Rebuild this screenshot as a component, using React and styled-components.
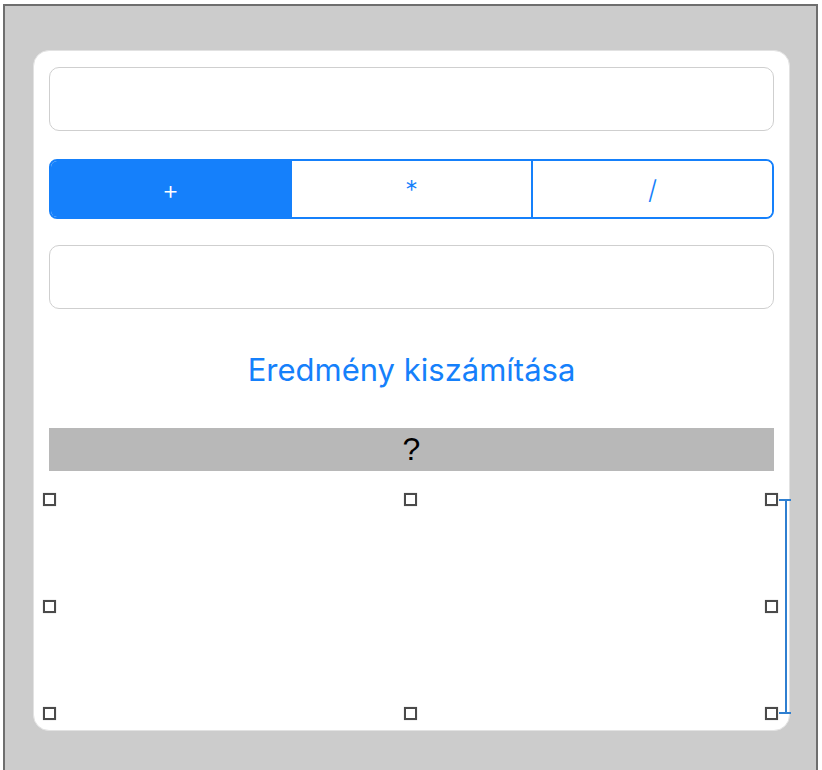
import React, { useState } from 'react';
import styled, { createGlobalStyle } from 'styled-components';

const GlobalStyle = createGlobalStyle`
  html, body {
    margin: 0;
    padding: 0;
    background: #ffffff;
    height: 100%;
  }
  #root {
    height: 100%;
  }
`;

const ops = ['+', '*', '/'];

function App() {
  const [op, setOp] = useState(0);
  return (
    <>
      <GlobalStyle />
      <Stage>
        <Frame>
          <Card>
            <Field />
            <Segmented>
              {ops.map((o, i) => (
                <Segment key={o} $active={op === i} onClick={() => setOp(i)}>
                  {o}
                </Segment>
              ))}
            </Segmented>
            <Field />
            <ActionButton>Eredmény kiszámítása</ActionButton>
            <ResultBar>?</ResultBar>
            <Selection>
              <HandleRow>
                <Handle />
                <Handle />
                <Handle />
              </HandleRow>
              <HandleRow>
                <Handle />
                <Handle $hidden />
                <Handle />
              </HandleRow>
              <HandleRow>
                <Handle />
                <Handle />
                <Handle />
              </HandleRow>
              <Guide />
            </Selection>
          </Card>
        </Frame>
      </Stage>
    </>
  );
}

const Stage = styled.div`
  height: 100%;
  padding: 4px 4px 0 3px;
  box-sizing: border-box;
  display: flex;
`;

const Frame = styled.div`
  flex: 1;
  background: #cccccc;
  border: 2px solid #6e6e6e;
  border-bottom: none;
  padding: 44px 26px 0 28px;
  box-sizing: border-box;
`;

const Card = styled.div`
  background: #ffffff;
  border: 1px solid #e2e2e2;
  border-radius: 16px;
  height: 681px;
  box-sizing: border-box;
  padding: 16px 15px 0 15px;
  display: flex;
  flex-direction: column;
`;

const Field = styled.input`
  height: 64px;
  border: 1px solid #cfcfcf;
  border-radius: 10px;
  background: #ffffff;
  box-sizing: border-box;
  outline: none;
  font-size: 20px;
  padding: 0 12px;
  flex-shrink: 0;
`;

const Segmented = styled.div`
  display: flex;
  height: 60px;
  margin: 28px 0 26px;
  border: 2px solid #1580fb;
  border-radius: 8px;
  overflow: hidden;
  box-sizing: border-box;
  flex-shrink: 0;
`;

const Segment = styled.button`
  flex: 1;
  border: none;
  border-left: 2px solid #1580fb;
  background: ${(p) => (p.$active ? '#1580fb' : '#ffffff')};
  color: ${(p) => (p.$active ? '#ffffff' : '#1580fb')};
  font-family: Inter, 'Liberation Sans', sans-serif;
  font-size: 26px;
  font-weight: 300;
  padding: 0;
  cursor: pointer;
  &:first-child {
    border-left: none;
  }
`;

const ActionButton = styled.button`
  height: 119px;
  border: none;
  background: transparent;
  color: #1580fb;
  font-family: Inter, 'Liberation Sans', sans-serif;
  font-size: 31px;
  padding: 2px 0 0;
  cursor: pointer;
  flex-shrink: 0;
`;

const ResultBar = styled.div`
  height: 43px;
  background: #b8b8b8;
  color: #000000;
  font-family: 'Liberation Sans', Arial, sans-serif;
  font-size: 32px;
  display: flex;
  align-items: center;
  justify-content: center;
  flex-shrink: 0;
`;

const Selection = styled.div`
  position: relative;
  height: 227px;
  margin: 22px -4px 0 -6px;
  display: flex;
  flex-direction: column;
  justify-content: space-between;
`;

const HandleRow = styled.div`
  display: flex;
  justify-content: space-between;
`;

const Handle = styled.span`
  width: 13px;
  height: 13px;
  box-sizing: border-box;
  border: 2px solid #4a4a4a;
  background: #ffffff;
  box-shadow: 0 0 1px rgba(0, 0, 0, 0.3);
  visibility: ${(p) => (p.$hidden ? 'hidden' : 'visible')};
`;

const Guide = styled.span`
  position: absolute;
  top: 6px;
  bottom: 6px;
  right: -9px;
  width: 2px;
  background: #2f7fd0;
  &::before,
  &::after {
    content: '';
    position: absolute;
    left: -6px;
    width: 12px;
    height: 2px;
    background: #2f7fd0;
  }
  &::before {
    top: 0;
  }
  &::after {
    bottom: 0;
  }
`;

export default App;
